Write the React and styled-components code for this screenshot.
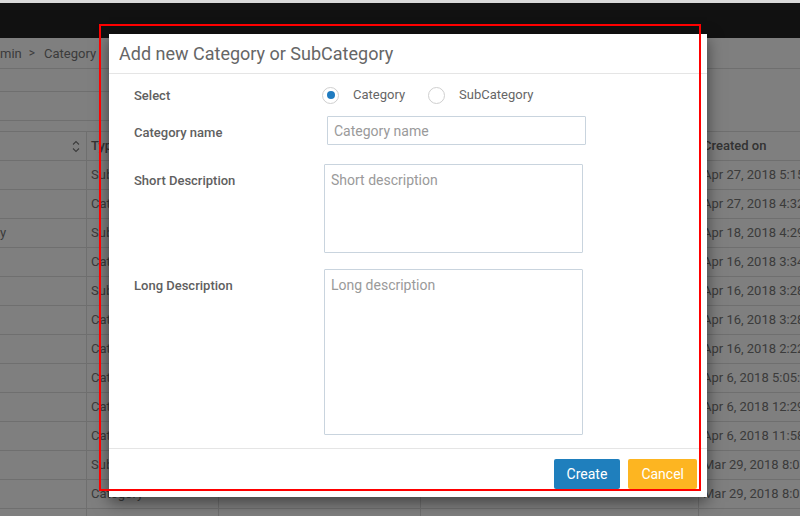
import React from 'react';
import styled, { createGlobalStyle } from 'styled-components';

const GlobalStyle = createGlobalStyle`
  html, body { margin: 0; padding: 0; width: 800px; height: 516px; overflow: hidden; background: #fff; }
  body { font-family: Roboto, "Liberation Sans", sans-serif; }
  #root { width: 800px; height: 516px; }
  * { box-sizing: border-box; }
`;

const Root = styled.div`
  position: relative;
  width: 800px;
  height: 516px;
  overflow: hidden;
  background: #fff;
`;

const TopStrip = styled.div`
  height: 3px;
  background: #dadada;
`;

const NavBar = styled.div`
  height: 35px;
  background: #222;
`;

const Breadcrumb = styled.div`
  height: 31px;
  border-bottom: 1px solid #dfdfdf;
  display: flex;
  align-items: center;
  font-size: 13px;
  color: #777;
  white-space: nowrap;
`;

const Sep = styled.span`
  margin: 0 9px 0 7px;
  font-size: 12px;
`;

const Toolbar = styled.div`
  height: 62px;
  padding-top: 22px;
`;

const SearchBox = styled.div`
  width: 300px;
  height: 30px;
  border-top: 1px solid #dfdfdf;
  border-bottom: 1px solid #dfdfdf;
`;

const Table = styled.div`
  border-bottom: 1px solid #dfdfdf;
`;

const Row = styled.div`
  display: grid;
  grid-template-columns: 86px 132px 202px 278px 1fr;
  height: 29px;
  border-top: 1px solid #dfdfdf;
`;

const Cell = styled.div`
  position: relative;
  padding-left: ${p => (p.$first ? '0' : '4px')};
  border-left: ${p => (p.$first ? 'none' : '1px solid #dfdfdf')};
  font-size: 13px;
  line-height: 28px;
  color: ${p => (p.$head ? '#666' : '#777')};
  font-weight: ${p => (p.$head ? 500 : 400)};
  white-space: nowrap;
  overflow: hidden;
`;

const SortIcon = styled.svg`
  position: absolute;
  right: 6px;
  top: 8px;
`;

const Overlay = styled.div`
  position: absolute;
  top: 3px;
  left: 0;
  right: 0;
  bottom: 0;
  background: rgba(0, 0, 0, 0.5);
`;

const Modal = styled.div`
  position: absolute;
  left: 109px;
  top: 34px;
  width: 598px;
  height: 463px;
  background: #fff;
  box-shadow: 0 5px 15px rgba(0, 0, 0, 0.5);
  display: flex;
  flex-direction: column;
`;

const ModalHeader = styled.div`
  height: 40px;
  border-bottom: 1px solid #e5e5e5;
  display: flex;
  align-items: center;
  padding-left: 10px;
`;

const Title = styled.h4`
  margin: 0;
  font-size: 18px;
  font-weight: 400;
  color: #666;
`;

const ModalBody = styled.div`
  flex: 1;
  padding: 12px 0 0 25px;
  display: flex;
  flex-direction: column;
`;

const FormRow = styled.div`
  display: grid;
  grid-template-columns: 188px 1fr;
  align-items: ${p => (p.$center ? 'center' : 'start')};
  margin-top: ${p => p.$mt || 0}px;
  min-height: ${p => p.$h || 0}px;
`;

const Label = styled.label`
  font-size: 13px;
  line-height: 20px;
  font-weight: 500;
  color: #606060;
  margin-top: ${p => p.$mt || 0}px;
`;

const RadioGroup = styled.div`
  display: flex;
  align-items: center;
  margin-top: -2px;
`;

const RadioOption = styled.label`
  display: flex;
  align-items: center;
  font-size: 13px;
  color: #666;
  margin-right: 23px;
`;

const RadioText = styled.span`
  margin-bottom: 2px;
`;

const RadioCircle = styled.span`
  width: 17px;
  height: 17px;
  border-radius: 50%;
  border: 1px solid #cfcfcf;
  display: flex;
  align-items: center;
  justify-content: center;
  margin-right: 14px;
  &::after {
    content: '';
    width: 8px;
    height: 8px;
    border-radius: 50%;
    background: ${p => (p.$checked ? '#1f7bc0' : 'transparent')};
  }
`;

const TextInput = styled.input`
  width: 259px;
  height: 29px;
  margin-left: 5px;
  border: 1px solid #c9d4de;
  border-radius: 1px;
  padding: 0 6px;
  font-family: Roboto, "Liberation Sans", sans-serif;
  font-size: 14px;
  color: #555;
  outline: none;
  &::placeholder { color: #9a9a9a; }
`;

const TextArea = styled.textarea`
  display: block;
  width: 259px;
  height: ${p => p.$h}px;
  margin-left: 2px;
  border: 1px solid #c9d4de;
  border-radius: 1px;
  padding: 5px 6px;
  font-family: Roboto, "Liberation Sans", sans-serif;
  font-size: 14px;
  line-height: 20px;
  color: #555;
  resize: none;
  outline: none;
  &::placeholder { color: #9a9a9a; }
`;

const ModalFooter = styled.div`
  height: 49px;
  border-top: 1px solid #e5e5e5;
  display: flex;
  justify-content: flex-end;
  align-items: flex-start;
  padding: 10px 10px 0 0;
  gap: 8px;
`;

const Button = styled.button`
  height: 30px;
  padding: 0 13px;
  border: none;
  border-radius: 2px;
  background: ${p => p.$bg};
  color: #fff;
  font-family: Roboto, "Liberation Sans", sans-serif;
  font-size: 14px;
  cursor: pointer;
`;

const Highlight = styled.div`
  position: absolute;
  left: 99px;
  top: 24px;
  width: 602px;
  height: 467px;
  border: 2px solid #ff0000;
  pointer-events: none;
`;

const rows = [
  ['', 'SubCategory', 'Apr 27, 2018 5:15:42 PM'],
  ['', 'Category', 'Apr 27, 2018 4:32:10 PM'],
  ['y', 'SubCategory', 'Apr 18, 2018 4:29:51 PM'],
  ['', 'Category', 'Apr 16, 2018 3:34:07 PM'],
  ['', 'SubCategory', 'Apr 16, 2018 3:28:40 PM'],
  ['', 'Category', 'Apr 16, 2018 3:28:12 PM'],
  ['', 'Category', 'Apr 16, 2018 2:22:35 PM'],
  ['', 'Category', 'Apr 6, 2018 5:05:19 PM'],
  ['', 'Category', 'Apr 6, 2018 12:29:44 PM'],
  ['', 'Category', 'Apr 6, 2018 11:58:03 AM'],
  ['', 'SubCategory', 'Mar 29, 2018 8:04:27 PM'],
  ['', 'Category', 'Mar 29, 2018 8:03:55 PM'],
  ['', '', ''],
];

export default function App() {
  return (
    <Root>
      <GlobalStyle />
      <TopStrip />
      <NavBar />
      <Breadcrumb>
        min<Sep>&gt;</Sep>Category
      </Breadcrumb>
      <Toolbar>
        <SearchBox />
      </Toolbar>
      <Table>
        <Row>
          <Cell $first $head>
            <SortIcon width="8" height="13" viewBox="0 0 8 13">
              <path d="M1 4.5 L4 1.5 L7 4.5 M1 8.5 L4 11.5 L7 8.5" fill="none" stroke="#777" strokeWidth="1.1" />
            </SortIcon>
          </Cell>
          <Cell $head>Type</Cell>
          <Cell $head>Description</Cell>
          <Cell $head>Parent</Cell>
          <Cell $head>Created on</Cell>
        </Row>
        {rows.map((r, i) => (
          <Row key={i}>
            <Cell $first>{r[0]}</Cell>
            <Cell>{r[1]}</Cell>
            <Cell />
            <Cell />
            <Cell>{r[2]}</Cell>
          </Row>
        ))}
      </Table>
      <Overlay />
      <Modal>
        <ModalHeader>
          <Title>Add new Category or SubCategory</Title>
        </ModalHeader>
        <ModalBody>
          <FormRow $center $h={20}>
            <Label>Select</Label>
            <RadioGroup>
              <RadioOption>
                <RadioCircle $checked />
                <RadioText>Category</RadioText>
              </RadioOption>
              <RadioOption>
                <RadioCircle />
                <RadioText>SubCategory</RadioText>
              </RadioOption>
            </RadioGroup>
          </FormRow>
          <FormRow $mt={10}>
            <Label $mt={7}>Category name</Label>
            <TextInput placeholder="Category name" />
          </FormRow>
          <FormRow $mt={19}>
            <Label $mt={7}>Short Description</Label>
            <TextArea $h={89} placeholder="Short description" />
          </FormRow>
          <FormRow $mt={16}>
            <Label $mt={7}>Long Description</Label>
            <TextArea $h={166} placeholder="Long description" />
          </FormRow>
        </ModalBody>
        <ModalFooter>
          <Button $bg="#1f7fbd">Create</Button>
          <Button $bg="#fdb521">Cancel</Button>
        </ModalFooter>
      </Modal>
      <Highlight />
    </Root>
  );
}
